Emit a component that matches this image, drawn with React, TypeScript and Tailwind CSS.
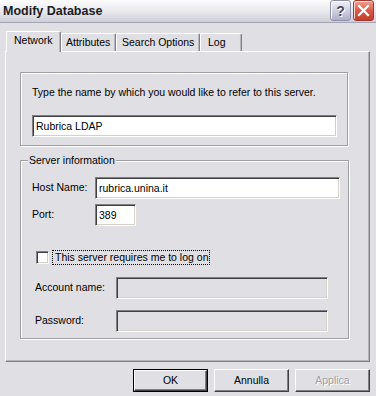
import React from "react";

const sunken =
  "border border-t-[#808080] border-l-[#808080] border-r-white border-b-white shadow-[inset_1px_1px_0_#404040,inset_-1px_-1px_0_#d4d0c8]";

function Input({ w, value, disabled }: { w: string; value?: string; disabled?: boolean }) {
  return (
    <div
      className={`${w} h-[22px] ${sunken} ${disabled ? "bg-[#e0dfe3]" : "bg-white"} flex items-center pl-[3px] text-black leading-[13px]`}
    >
      {value}
    </div>
  );
}

function Button({ label, def, disabled }: { label: string; def?: boolean; disabled?: boolean }) {
  const inner = (
    <div
      className={`w-full h-full flex items-center justify-center border border-t-white border-l-white border-r-[#404040] border-b-[#404040] shadow-[inset_-1px_-1px_0_#808080] ${
        disabled ? "text-[#a0a0a4] [text-shadow:1px_1px_0_#ffffff]" : "text-black"
      }`}
    >
      {label}
    </div>
  );
  return (
    <div className={`w-[75px] h-[23px] ${def ? "border border-black" : ""}`}>{inner}</div>
  );
}

function Tab({ label, w, pl, selected }: { label: string; w: string; pl: string; selected?: boolean }) {
  return (
    <div
      className={`${w} ${pl} flex items-center border-t border-l border-t-white border-l-white border-r border-r-[#808080] rounded-tl-[2px] rounded-tr-[2px] bg-[#e0dfe3] shadow-[inset_-1px_0_0_#b8b8bc] ${
        selected ? "h-[21px] -mb-px relative z-10 pb-[2px]" : "h-[18px]"
      }`}
    >
      {label}
    </div>
  );
}

export default function App() {
  return (
    <div className="w-[376px] h-[396px] bg-[#e0dfe3] font-['Liberation_Sans',Arial,sans-serif] text-[10.5px] text-black overflow-hidden">
      {/* Title bar */}
      <div className="h-[23px] bg-gradient-to-b from-[#fdfdfe] via-[#e9e9ef] to-[#cfcfd8] border-b border-b-[#a4a4b4] flex items-center justify-between pl-[3px] pr-[2px]">
        <span className="text-[12.5px] font-bold text-[#1c1c24] leading-[14px] mt-[-1px]">Modify Database</span>
        <div className="flex gap-[2px] items-center mt-[-1px]">
          <div className="w-[21px] h-[21px] rounded-[3px] border border-[#8e90aa] bg-gradient-to-b from-[#f2f2f8] via-[#cfd1e2] to-[#aeb1c8] shadow-[inset_1px_1px_0_#ffffff] flex items-center justify-center">
            <span className="text-[14px] font-bold text-[#4a4c68] leading-[14px] [text-shadow:1px_1px_0_#ffffff]">?</span>
          </div>
          <div className="w-[21px] h-[21px] rounded-[3px] border border-[#a03a30] bg-gradient-to-b from-[#f0a090] via-[#dc5a48] to-[#c23e2c] shadow-[inset_1px_1px_0_#ffd6cc] flex items-center justify-center">
            <svg width="13" height="13" viewBox="0 0 13 13">
              <path d="M2 2 L11 11 M11 2 L2 11" stroke="#ffffff" strokeWidth="2.2" strokeLinecap="square" />
            </svg>
          </div>
        </div>
      </div>

      {/* Tabs */}
      <div className="mt-[8px] h-[20px] flex items-end pl-[6px]">
        <Tab label="Network" w="w-[55px]" pl="pl-[7px]" selected />
        <Tab label="Attributes" w="w-[55px]" pl="pl-[4px]" />
        <Tab label="Search Options" w="w-[84px]" pl="pl-[5px]" />
        <Tab label="Log" w="w-[42px]" pl="pl-[7px]" />
      </div>

      {/* Panel */}
      <div className="ml-[5px] w-[365px] h-[311px] border border-t-white border-l-white border-r-[#808080] border-b-[#808080] shadow-[inset_-1px_-1px_0_#b4b4b8] pl-[14px] pt-[20px]">
        {/* Group 1 */}
        <div className="w-[328px] h-[74px] border border-[#a0a0a4] shadow-[1px_1px_0_#ffffff,inset_1px_1px_0_#ffffff] pl-[11px] pt-[13px]">
          <div className="leading-[13px]">Type the name by which you would like to refer to this server.</div>
          <div className="mt-[16px]">
            <Input w="w-[305px]" value="Rubrica LDAP" />
          </div>
        </div>

        {/* Group 2 */}
        <div className="relative mt-[14px] w-[329px] h-[179px] border border-[#a0a0a4] shadow-[1px_1px_0_#ffffff,inset_1px_1px_0_#ffffff] pl-[11px] pt-[16px]">
          <span className="absolute left-[7px] top-[-7px] bg-[#e0dfe3] px-[1px] leading-[13px]">Server information</span>

          <div className="flex items-center h-[22px]">
            <span className="w-[63px]">Host Name:</span>
            <Input w="w-[245px]" value="rubrica.unina.it" />
          </div>
          <div className="flex items-center h-[22px] mt-[5px]">
            <span className="w-[63px]">Port:</span>
            <Input w="w-[41px]" value="389" />
          </div>

          <div className="flex items-center h-[15px] mt-[24px] pl-[4px]">
            <div className="w-[13px] h-[13px] bg-white border border-t-[#808080] border-l-[#808080] border-r-white border-b-white shadow-[inset_1px_1px_0_#404040,inset_-1px_-1px_0_#d4d0c8]" />
            <div className="ml-[3px] h-[15px] border border-dotted border-black flex items-center pl-[2px] pr-[1px] leading-[13px]">
              This server requires me to log on
            </div>
          </div>

          <div className="flex items-center h-[22px] mt-[12px] pl-[3px]">
            <span className="w-[81px]">Account name:</span>
            <Input w="w-[212px]" disabled />
          </div>
          <div className="flex items-center h-[22px] mt-[11px] pl-[3px]">
            <span className="w-[81px]">Password:</span>
            <Input w="w-[212px]" disabled />
          </div>
        </div>
      </div>

      {/* Buttons */}
      <div className="mt-[7px] flex justify-end gap-[6px] pr-[6px]">
        <Button label="OK" def />
        <Button label="Annulla" />
        <Button label="Applica" disabled />
      </div>
    </div>
  );
}
